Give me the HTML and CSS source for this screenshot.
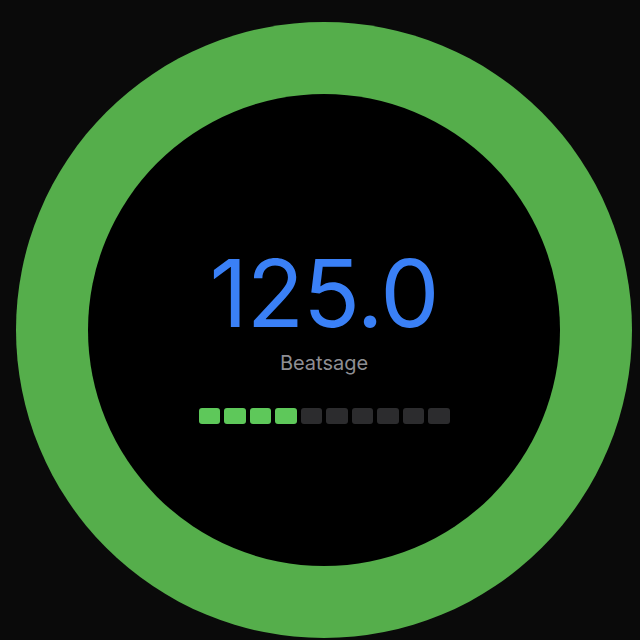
FILE: index.html
```html
<!DOCTYPE html>
<html>
<head>
<meta charset="utf-8">
<link rel="stylesheet" href="styles.css">
</head>
<body>
<div class="stage">
  <div class="ring">
    <div class="face">
      <div class="value">125.0</div>
      <div class="label">Beatsage</div>
      <div class="meter">
        <span class="seg on"></span>
        <span class="seg on"></span>
        <span class="seg on"></span>
        <span class="seg on"></span>
        <span class="seg"></span>
        <span class="seg"></span>
        <span class="seg"></span>
        <span class="seg"></span>
        <span class="seg"></span>
        <span class="seg"></span>
      </div>
    </div>
  </div>
</div>
</body>
</html>
```

FILE: styles.css
```css
html, body {
  margin: 0;
  padding: 0;
  background: #0a0a0a;
  width: 640px;
  height: 640px;
  overflow: hidden;
  font-family: Inter, "Noto Sans", sans-serif;
}
.stage {
  padding: 22px 0 0 16px;
}
.ring {
  width: 616px;
  height: 616px;
  border-radius: 50%;
  background: #55ae4b;
  display: flex;
  align-items: center;
  justify-content: center;
}
.face {
  width: 472px;
  height: 472px;
  box-sizing: border-box;
  padding-top: 10px;
  border-radius: 50%;
  background: #000;
  display: flex;
  flex-direction: column;
  align-items: center;
  justify-content: center;
}
.value {
  font-size: 94px;
  line-height: 1;
  font-weight: 400;
  color: #3a80f6;
  letter-spacing: -1px;
}
.label {
  margin-top: 12.7px;
  font-size: 20px;
  line-height: 1;
  color: #8e8e93;
}
.meter {
  margin-top: 35.3px;
  display: flex;
  gap: 4px;
}
.seg {
  width: 21.5px;
  height: 16px;
  border-radius: 3px;
  background: #2c2c2e;
}
.seg.on {
  background: #5ec85a;
}
```
